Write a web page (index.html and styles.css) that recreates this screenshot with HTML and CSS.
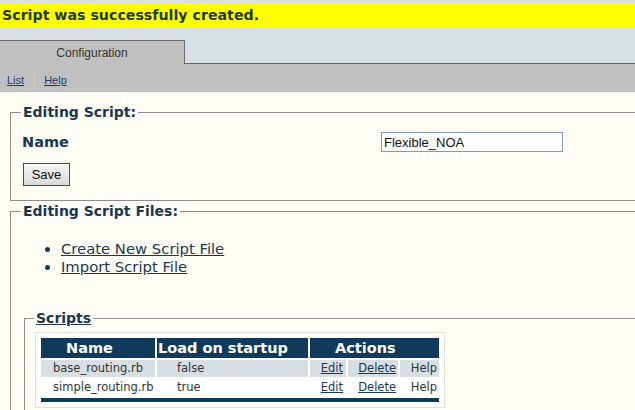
FILE: index.html
```html
<!DOCTYPE html>
<html>
<head>
<meta charset="utf-8">
<link rel="stylesheet" href="styles.css">
</head>
<body>
<div class="page">
  <div class="flash">Script was successfully created.</div>
  <div class="tabs"><div class="tab">Configuration</div></div>
  <div class="subnav"><a href="#">List</a><span class="sep"></span><a href="#">Help</a></div>
  <div class="content">
    <fieldset class="fs fs-edit">
      <legend>Editing Script:</legend>
      <div class="name-row">
        <label class="name-label">Name</label>
        <input class="name-input" type="text" value="Flexible_NOA">
      </div>
      <button class="save">Save</button>
    </fieldset>
    <fieldset class="fs fs-files">
      <legend>Editing Script Files:</legend>
      <ul class="file-links">
        <li><a href="#">Create New Script File</a></li>
        <li><a href="#">Import Script File</a></li>
      </ul>
      <fieldset class="fs fs-scripts">
        <legend><a href="#">Scripts</a></legend>
        <div class="tablebox">
          <table class="scripts">
            <colgroup>
              <col class="w-name">
              <col class="w-load">
              <col class="w-edit">
              <col class="w-del">
              <col class="w-help">
            </colgroup>
            <thead>
              <tr>
                <th class="c-name">Name</th>
                <th class="c-load">Load on startup</th>
                <th class="c-actions" colspan="3">Actions</th>
              </tr>
            </thead>
            <tbody>
              <tr class="odd">
                <td class="c-name">base_routing.rb</td>
                <td class="c-load">false</td>
                <td class="c-edit"><a href="#">Edit</a></td>
                <td class="c-del"><a href="#">Delete</a></td>
                <td class="c-help">Help</td>
              </tr>
              <tr class="even">
                <td class="c-name">simple_routing.rb</td>
                <td class="c-load">true</td>
                <td class="c-edit"><a href="#">Edit</a></td>
                <td class="c-del"><a href="#">Delete</a></td>
                <td class="c-help">Help</td>
              </tr>
            </tbody>
            <tfoot>
              <tr><td colspan="5" class="foot"></td></tr>
            </tfoot>
          </table>
        </div>
      </fieldset>
    </fieldset>
  </div>
</div>
</body>
</html>
```
FILE: styles.css
```css
html, body {
  margin: 0;
  padding: 0;
  overflow: hidden;
  background: #fffdf5;
}
.page {
  width: 720px;
  font-family: "DejaVu Sans", Verdana, sans-serif;
}
.flash {
  margin-top: 3px;
  height: 24px;
  line-height: 24px;
  background: #ffff00;
  color: #233a22;
  font-weight: bold;
  font-size: 14.2px;
  padding-left: 2px;
  box-shadow: 0 -3px 0 #d9dfe3;
}
.tabs {
  background: #d9e0e4;
  height: 36px;
  border-bottom: 1px solid #666;
  display: flex;
  align-items: flex-end;
}
.tab {
  width: 184px;
  height: 23px;
  margin-bottom: -1px;
  background: #c0c0c0;
  border-top: 1px solid #6a6a6a;
  border-right: 1px solid #6a6a6a;
  font-family: "Liberation Sans", Arial, sans-serif;
  font-size: 12px;
  color: #333;
  text-align: center;
  line-height: 24px;
}
.subnav {
  background: #c0c0c0;
  height: 25px;
  padding-top: 3px;
  display: flex;
  align-items: center;
  padding-left: 7px;
  font-family: "Liberation Sans", Arial, sans-serif;
  font-size: 11px;
}
.subnav a {
  color: #1c3c66;
}
.subnav .sep {
  width: 1px;
  height: 16px;
  background: #d8cbb0;
  margin: 0 9px 0 10px;
}
.content {
  padding: 0 0 0 10px;
}
.fs {
  border: 1px solid #8c8c8c;
  margin: 0;
  min-width: 0;
}
.fs legend {
  font-size: 14px;
  font-weight: bold;
  color: #1b3852;
  line-height: 18px;
  padding: 0 2px;
}
.fs-edit {
  margin-top: 11px;
  padding: 11px 10px 14px 11px;
}
.fs-edit legend {
  margin-left: -1px;
}
.name-row {
  display: grid;
  grid-template-columns: 359px 182px;
  align-items: center;
  height: 20px;
  margin-bottom: 11px;
}
.name-label {
  font-size: 14.5px;
  font-weight: bold;
  color: #1b3852;
}
.name-input {
  box-sizing: border-box;
  width: 182px;
  height: 20px;
  border: 1px solid #7f9db9;
  background: #fff;
  font-family: "Liberation Sans", Arial, sans-serif;
  font-size: 13px;
  color: #111;
  padding: 0 2px;
  margin: 0;
}
.save {
  box-sizing: border-box;
  width: 47px;
  height: 23px;
  margin: 0 0 0 1px;
  border: 1px solid #4a4a4a;
  background: linear-gradient(#f6f6f6, #dadada);
  font-family: "Liberation Sans", Arial, sans-serif;
  font-size: 13px;
  color: #111;
  padding: 0;
  display: block;
}
.fs-files {
  margin-top: 1px;
  padding: 0 10px 20px 10px;
}
.file-links {
  margin: 20px 0 33px 0;
  padding-left: 40px;
  font-size: 14.8px;
  line-height: 18px;
  color: #1b3852;
}
.file-links a {
  color: #1b3852;
}
.fs-scripts {
  margin-left: 3px;
  padding: 5px 9px 20px 9px;
}
.fs-scripts legend a {
  color: #1b3852;
}
.tablebox {
  display: inline-block;
  margin-left: 1px;
  border: 1px solid #e6e1d6;
  background: #fff;
  padding: 3px;
}
.scripts {
  border-spacing: 2px;
  border-collapse: separate;
  width: 402px;
  table-layout: fixed;
  margin: 0;
}
.scripts col.w-name { width: 114px; }
.scripts col.w-load { width: 151px; }
.scripts col.w-edit { width: 36px; }
.scripts col.w-del { width: 50px; }
.scripts col.w-help { width: 39px; }
.scripts th {
  background: #0f3a5c;
  color: #fff;
  font-size: 14.5px;
  font-weight: bold;
  height: 20px;
  padding: 0;
  text-align: left;
  line-height: 20px;
  white-space: nowrap;
}
.scripts th.c-name { padding-left: 25px; }
.scripts th.c-load { padding-left: 1px; }
.scripts th.c-actions { padding-left: 25px; }
.scripts td {
  font-size: 11.5px;
  color: #333;
  height: 17px;
  padding: 0;
  line-height: 17px;
  white-space: nowrap;
}
.scripts td a { color: #1b3852; }
.scripts tr.odd td { background: #d8dfe3; }
.scripts td.c-name { padding-left: 12px; }
.scripts td.c-load { padding-left: 20px; }
.scripts td.c-edit { text-align: right; padding-right: 3px; }
.scripts td.c-del { text-align: right; padding-right: 2px; }
.scripts td.c-help { text-align: right; padding-right: 2px; }
.scripts td.foot {
  background: #0f3a5c;
  height: 4px;
  line-height: 0;
  font-size: 0;
}
```
